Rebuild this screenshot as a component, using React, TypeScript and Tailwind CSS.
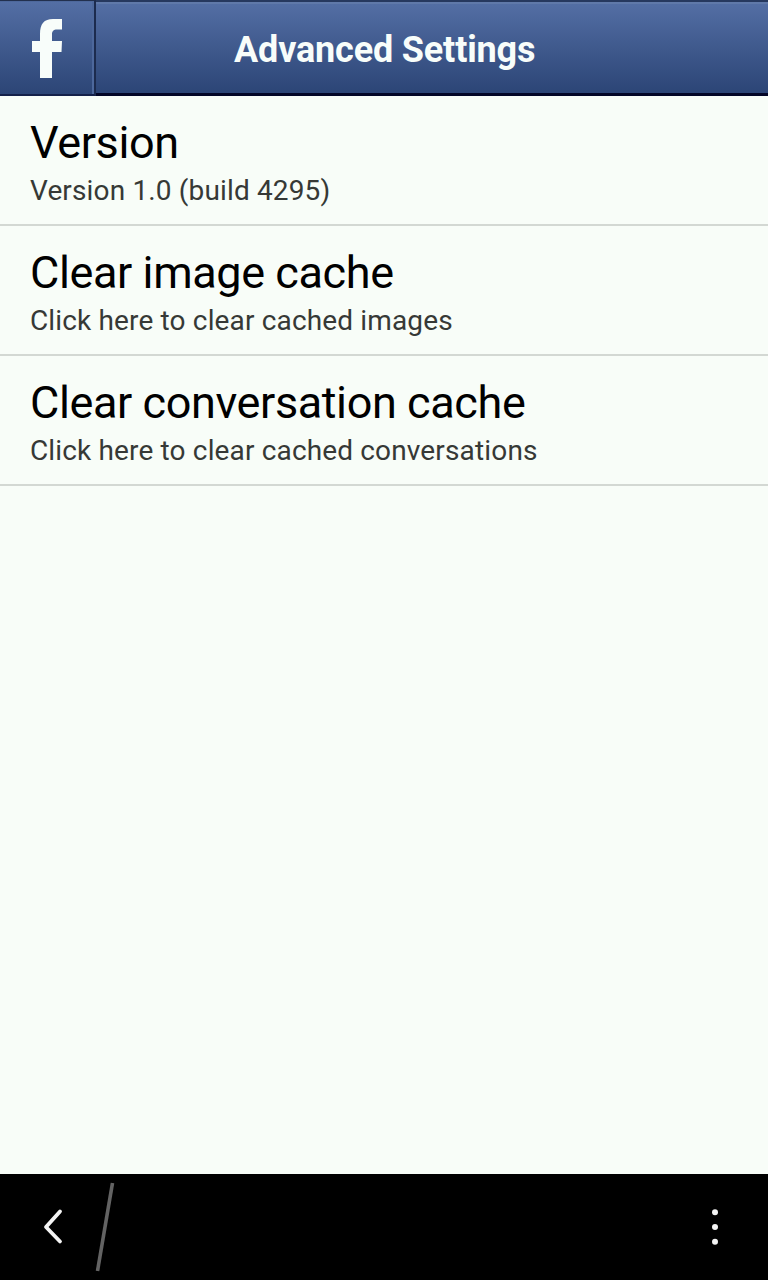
type Setting = {
    title: string
    description: string
}

const settings: Setting[] = [
    { title: 'Version', description: 'Version 1.0 (build 4295)' },
    { title: 'Clear image cache', description: 'Click here to clear cached images' },
    { title: 'Clear conversation cache', description: 'Click here to clear cached conversations' },
]

const Header = () => {
    return (
        <header className="flex h-24 shrink-0">
            <button
                aria-label="Home"
                className="flex w-24 shrink-0 border-t border-r-2 border-b-2 border-t-[#22304e] border-r-[#1c2b4e] border-b-[#14214a] bg-linear-to-b from-[#546fa5] to-[#2c4576] shadow-[inset_-2px_1px_0_#4d689c]"
            >
                <svg className="h-[93px] w-[94px]" viewBox="0 1 94 93" fill="#f8fdfa">
                    <path d="M40 78V52H32V41H40V34C40 24 44 19 53 19H62V29.5H57C53.5 29.5 52 31 52 34.5V41H62L61.5 52H52V78Z" />
                </svg>
            </button>
            <div className="flex flex-1 border-t-2 border-b-[3px] border-t-[#26385e] border-b-[#030627] bg-linear-to-b from-[#546fa5] to-[#2c4576] shadow-[inset_0_2px_0_#6079a9]">
                <h1 className="mt-[27px] ml-[138px] text-[36px] leading-[42px] font-bold tracking-[-0.16px] whitespace-nowrap text-[#f8fdfa]">
                    Advanced Settings
                </h1>
            </div>
        </header>
    )
}

const SettingRow = ({ title, description }: Setting) => {
    return (
        <li className="h-[130px] border-b-2 border-[#d3d8d3] px-[30px] pt-5 whitespace-nowrap">
            <h2 className="text-[45px] leading-[53px] tracking-[-0.4px] text-black">{title}</h2>
            <p className="mt-[5px] text-[28px] leading-[33px] tracking-[0.15px] text-[#363936]">
                {description}
            </p>
        </li>
    )
}

const ActionBar = () => {
    return (
        <footer className="flex h-[106px] shrink-0 justify-between bg-black">
            <button aria-label="Back">
                <svg className="h-[106px] w-[130px]" viewBox="0 0 130 106" fill="none">
                    <path
                        d="M60 37.5L46 53L60 67.5"
                        stroke="#f4f4f4"
                        strokeWidth="3.8"
                        strokeLinecap="round"
                        strokeLinejoin="round"
                    />
                    <path d="M112.5 9L97.5 97" stroke="#636363" strokeWidth="3.6" />
                </svg>
            </button>
            <button aria-label="More">
                <svg className="h-[106px] w-[106px]" viewBox="0 0 106 106" fill="#f4f4f4">
                    <circle cx="53" cy="38.2" r="3" />
                    <circle cx="53" cy="53" r="3" />
                    <circle cx="53" cy="67.8" r="3" />
                </svg>
            </button>
        </footer>
    )
}

export default function App() {
    return (
        <div className="flex h-screen flex-col bg-[#f8fdf8] font-[Roboto,sans-serif]">
            <Header />
            <main className="flex-1">
                <ul>
                    {settings.map(setting => (
                        <SettingRow key={setting.title} {...setting} />
                    ))}
                </ul>
            </main>
            <ActionBar />
        </div>
    )
}
